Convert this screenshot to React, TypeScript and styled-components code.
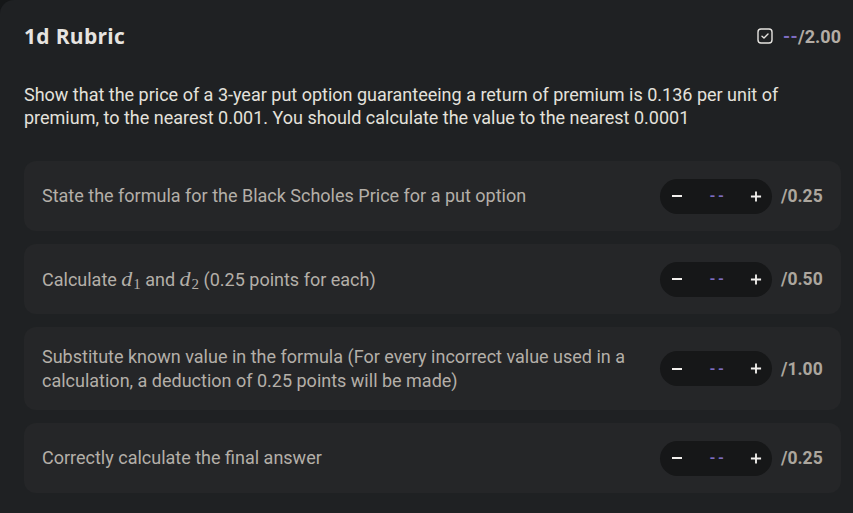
import React from "react";
import styled, { createGlobalStyle } from "styled-components";

const Global = createGlobalStyle`
  html, body { margin: 0; padding: 0; background: #151718; }
  body { font-family: Roboto, "Noto Sans", sans-serif; }
`;

const Card = styled.div`
  box-sizing: border-box;
  width: 853px;
  min-height: 513px;
  background: #1f2123;
  border-radius: 14px 0 0 0;
  padding: 22px 12px 20px 24px;
`;

const Header = styled.div`
  display: flex;
  align-items: center;
  justify-content: space-between;
  height: 28px;
`;

const Title = styled.h2`
  margin: 0;
  font-family: "Open Sans", Lato, sans-serif;
  font-weight: 700;
  font-size: 21px;
  letter-spacing: 0.3px;
  color: #e6e4e0;
`;

const Score = styled.div`
  display: flex;
  align-items: center;
  gap: 10px;
  font-family: Roboto, sans-serif;
  font-weight: 700;
  font-size: 18px;
  color: #b3ada5;
`;

const Dash = styled.span`
  color: #7d6cc0;
  letter-spacing: 0.5px;
`;

const Question = styled.p`
  margin: 33px 0 0 0;
  font-size: 18px;
  line-height: 23px;
  color: #e4e1dc;
  padding-right: 40px;
`;

const List = styled.div`
  display: flex;
  flex-direction: column;
  gap: 13px;
  margin-top: 32px;
`;

const Row = styled.div`
  display: flex;
  align-items: center;
  gap: 20px;
  background: #252628;
  border-radius: 12px;
  padding: 17.5px 18px;
  min-height: 35px;
`;

const RowText = styled.div`
  flex: 1;
  font-size: 18px;
  line-height: 24px;
  color: #b4afa8;
`;

const Stepper = styled.div`
  display: flex;
  align-items: center;
  justify-content: space-between;
  box-sizing: border-box;
  width: 112px;
  height: 35px;
  border-radius: 18px;
  background: #161718;
  padding: 0 10px 0 11px;
`;

const StepBtn = styled.span`
  width: 12px;
  display: flex;
  justify-content: center;
  color: #f2f0ed;
`;

const Value = styled.span`
  color: #7d6cc0;
  font-size: 15px;
  font-weight: 700;
  letter-spacing: 2.5px;
  margin-left: 3px;
`;

const Controls = styled.div`
  display: flex;
  align-items: center;
  gap: 9px;
`;

const Max = styled.span`
  font-weight: 700;
  font-size: 17.5px;
  color: #aca69e;
  width: 42px;
`;

const MathVar = styled.span`
  font-family: "Liberation Serif", "DejaVu Serif", serif;
  font-style: italic;
  font-size: 22px;
  color: #b4afa8;
  sub {
    font-style: normal;
    font-size: 15px;
    vertical-align: -3px;
    line-height: 0;
    margin-left: 1px;
  }
`;

const Minus = () => (
  <svg width="12" height="12" viewBox="0 0 12 12">
    <path d="M1 6h10" stroke="currentColor" strokeWidth="2" />
  </svg>
);
const Plus = () => (
  <svg width="13" height="13" viewBox="0 0 13 13">
    <path d="M1 6.5h11M6.5 1v11" stroke="currentColor" strokeWidth="2" />
  </svg>
);
const CheckBox = () => (
  <svg width="16" height="16" viewBox="0 0 16 16" fill="none">
    <rect x="1" y="1" width="14" height="14" rx="3" stroke="#e6e4e0" strokeWidth="1.4" />
    <path d="M5 8.2l2 1.8 4-4" stroke="#e6e4e0" strokeWidth="1.4" strokeLinecap="round" strokeLinejoin="round" />
  </svg>
);

type Item = { text: React.ReactNode; max: string };

const items: Item[] = [
  { text: "State the formula for the Black Scholes Price for a put option", max: "/0.25" },
  {
    text: (
      <>
        Calculate <MathVar>d<sub>1</sub></MathVar> and <MathVar>d<sub>2</sub></MathVar> (0.25 points for each)
      </>
    ),
    max: "/0.50",
  },
  {
    text: "Substitute known value in the formula (For every incorrect value used in a calculation, a deduction of 0.25 points will be made)",
    max: "/1.00",
  },
  { text: "Correctly calculate the final answer", max: "/0.25" },
];

export default function App() {
  return (
    <>
      <Global />
      <Card>
        <Header>
          <Title>1d Rubric</Title>
          <Score>
            <CheckBox />
            <span>
              <Dash>--</Dash>/2.00
            </span>
          </Score>
        </Header>
        <Question>
          Show that the price of a 3-year put option guaranteeing a return of premium is 0.136 per unit of premium, to the nearest 0.001. You should calculate the value to the nearest 0.0001
        </Question>
        <List>
          {items.map((it, i) => (
            <Row key={i}>
              <RowText>{it.text}</RowText>
              <Controls>
                <Stepper>
                  <StepBtn><Minus /></StepBtn>
                  <Value>--</Value>
                  <StepBtn><Plus /></StepBtn>
                </Stepper>
                <Max>{it.max}</Max>
              </Controls>
            </Row>
          ))}
        </List>
      </Card>
    </>
  );
}
